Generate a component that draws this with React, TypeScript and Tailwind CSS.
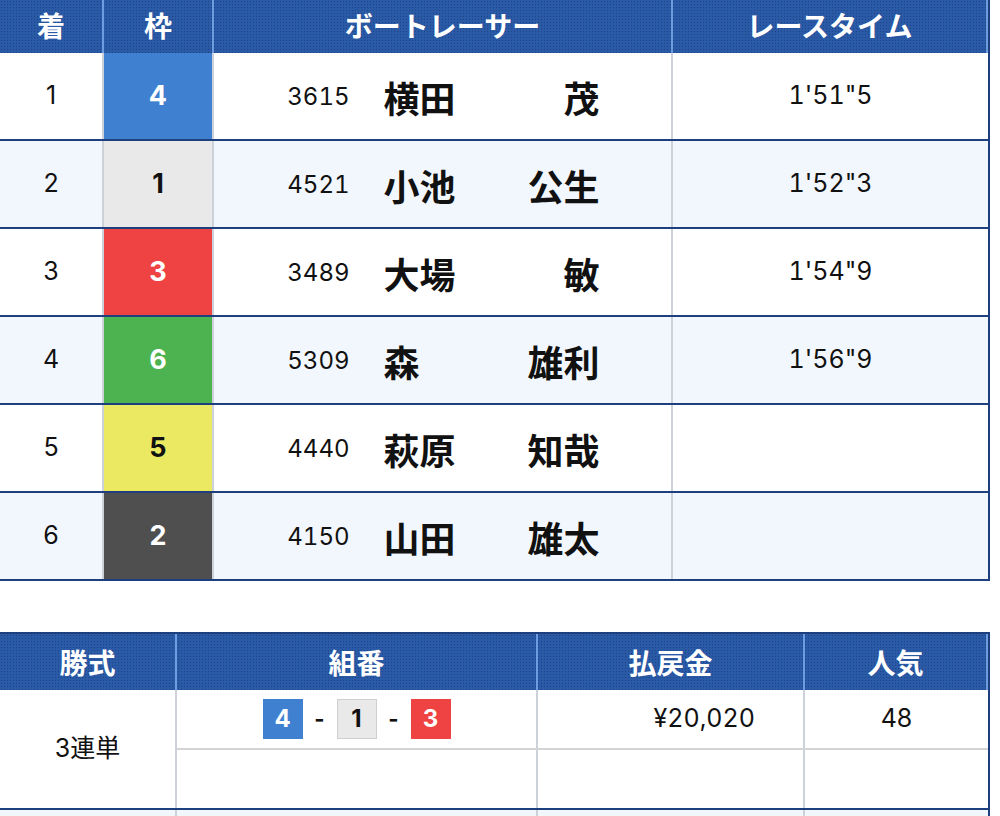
import React from 'react';

type Racer = {
  rank: number;
  frame: number;
  id: string;
  family: string;
  given: string;
  time: string;
};

const racers: Racer[] = [
  { rank: 1, frame: 4, id: '3615', family: '横田', given: '茂', time: `1'51"5` },
  { rank: 2, frame: 1, id: '4521', family: '小池', given: '公生', time: `1'52"3` },
  { rank: 3, frame: 3, id: '3489', family: '大場', given: '敏', time: `1'54"9` },
  { rank: 4, frame: 6, id: '5309', family: '森', given: '雄利', time: `1'56"9` },
  { rank: 5, frame: 5, id: '4440', family: '萩原', given: '知哉', time: '' },
  { rank: 6, frame: 2, id: '4150', family: '山田', given: '雄太', time: '' },
];

// boat frame colours
const frameStyle: Record<number, string> = {
  1: 'bg-[#e9e9e9] text-[#111]',
  2: 'bg-[#4f4f4f] text-white',
  3: 'bg-[#ef4242] text-white',
  4: 'bg-[#3f80d0] text-white',
  5: 'bg-[#ebe862] text-[#111]',
  6: 'bg-[#4db350] text-white',
};

const headBg =
  'bg-[#2a59a6] bg-[radial-gradient(circle,rgba(10,30,80,0.35)_0.8px,transparent_1px)] bg-size-[3px_3px]';
const headCell =
  'flex items-center justify-center border-r-2 border-[#6d9de0] text-white font-bold text-[28px] font-["Noto_Sans_CJK_JP",sans-serif]';
const bodyCell = 'flex items-center justify-center border-r-2 border-[#cdd2da]';

function Badge({ n }: { n: number }) {
  return (
    <span
      className={`flex h-[40px] w-[40px] items-center justify-center text-[24px] font-bold ${frameStyle[n]} ${
        n === 1 ? 'border border-[#cfcfcf]' : ''
      }`}
    >
      {n}
    </span>
  );
}

function ResultTable() {
  return (
    <div className="w-[990px] border-r-2 border-[#1d3f7e]">
      <div className={`flex h-[58px] border-t-2 border-[#1d3f7e] ${headBg}`}>
        <div className={`${headCell} w-[104px]`}>着</div>
        <div className={`${headCell} w-[110px]`}>枠</div>
        <div className={`${headCell} w-[459px]`}>ボートレーサー</div>
        <div className={`${headCell} flex-1 border-r-0`}>レースタイム</div>
      </div>
      {racers.map((r, i) => (
        <div
          key={r.rank}
          className={`flex h-[88px] border-b-2 border-[#1d3f7e] text-[25px] text-[#111] ${
            i % 2 === 1 ? 'bg-[#f2f7fd]' : 'bg-white'
          }`}
        >
          <div className={`${bodyCell} w-[104px]`}>{r.rank}</div>
          <div className={`${bodyCell} w-[110px] font-bold text-[27px] ${frameStyle[r.frame]}`}>{r.frame}</div>
          <div className={`${bodyCell} w-[459px] items-baseline pt-[1px] pr-[16px]`}>
            <span className="w-[80px] text-right text-[24px] tabular-nums">{r.id}</span>
            <span className="ml-[34px] flex w-[216px] justify-between text-[36px] font-bold leading-none font-['Noto_Sans_CJK_JP',sans-serif]">
              <span>{r.family}</span>
              <span>{r.given}</span>
            </span>
          </div>
          <div className="flex flex-1 items-center justify-center tabular-nums">{r.time}</div>
        </div>
      ))}
    </div>
  );
}

function PayoutTable() {
  return (
    <div className="mt-[51px] w-[990px] border-r-2 border-[#1d3f7e]">
      <div className={`flex h-[58px] border-t-2 border-[#1d3f7e] ${headBg}`}>
        <div className={`${headCell} w-[177px]`}>勝式</div>
        <div className={`${headCell} w-[361px]`}>組番</div>
        <div className={`${headCell} w-[267px]`}>払戻金</div>
        <div className={`${headCell} flex-1 border-r-0`}>人気</div>
      </div>

      <div className="flex h-[120px] border-b-2 border-[#1d3f7e] bg-white text-[25px] text-[#111]">
        <div className={`${bodyCell} w-[177px]`}>3連単</div>
        <div className="flex flex-1 flex-col">
          <div className="flex h-[60px] border-b-2 border-[#d4d4d4]">
            <div className={`${bodyCell} w-[361px] gap-[8px] font-bold`}>
              <Badge n={4} />
              <span className="w-[18px] text-center text-[22px]">-</span>
              <Badge n={1} />
              <span className="w-[18px] text-center text-[22px]">-</span>
              <Badge n={3} />
            </div>
            <div className={`${bodyCell} w-[267px] justify-end pr-[48px] tabular-nums`}>¥20,020</div>
            <div className="flex flex-1 items-center justify-center">48</div>
          </div>
          <div className="flex flex-1">
            <div className={`${bodyCell} w-[361px]`}></div>
            <div className={`${bodyCell} w-[267px]`}></div>
            <div className="flex-1"></div>
          </div>
        </div>
      </div>

      {/* next bet type row, only its top edge is in view */}
      <div className="flex h-[120px] border-b-2 border-[#1d3f7e] bg-[#f2f7fd]">
        <div className={`${bodyCell} w-[177px]`}></div>
        <div className={`${bodyCell} w-[361px]`}></div>
        <div className={`${bodyCell} w-[267px]`}></div>
        <div className="flex-1"></div>
      </div>
    </div>
  );
}

export default function App() {
  return (
    <div className="min-h-screen bg-white font-['Inter','Noto_Sans_CJK_JP',sans-serif]">
      <div className="-mt-[5px] pb-10">
        <ResultTable />
        <PayoutTable />
      </div>
    </div>
  );
}
